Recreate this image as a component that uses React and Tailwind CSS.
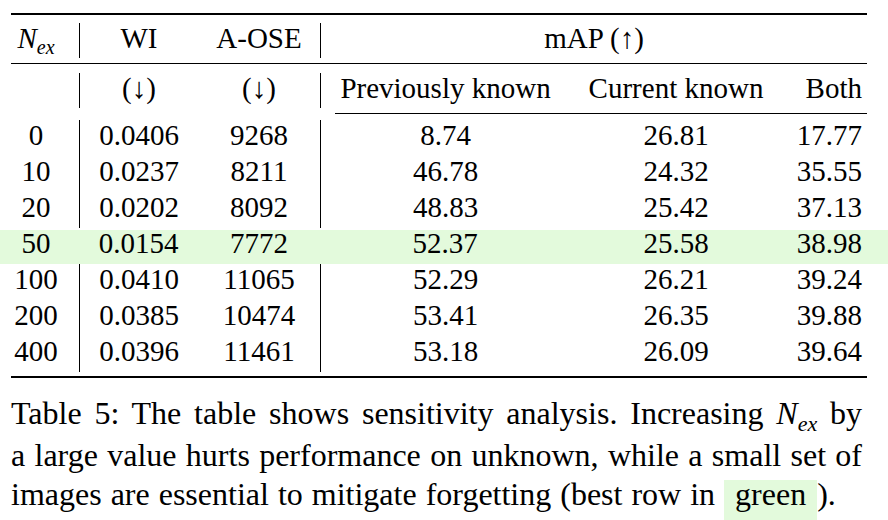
import React from "react";

const cx = (...c) => c.filter(Boolean).join(" ");

const cols = "grid grid-cols-[68px_119px_122px_250px_212px_85px]";

const rows = [
  ["0", "0.0406", "9268", "8.74", "26.81", "17.77"],
  ["10", "0.0237", "8211", "46.78", "24.32", "35.55"],
  ["20", "0.0202", "8092", "48.83", "25.42", "37.13"],
  ["50", "0.0154", "7772", "52.37", "25.58", "38.98", true],
  ["100", "0.0410", "11065", "52.29", "26.21", "39.24"],
  ["200", "0.0385", "10474", "53.41", "26.35", "39.88"],
  ["400", "0.0396", "11461", "53.18", "26.09", "39.64"],
];

function Nex({ sub = "text-[20px]" }) {
  return (
    <span className="font-['Liberation_Serif',serif] italic">
      N<span className={cx(sub, "relative top-[0.3em]")}>ex</span>
    </span>
  );
}

function DataRow({ r }) {
  const green = r[6];
  const line = green ? "" : "border-l border-black";
  const cells = (
    <div className={cx(cols, green ? "h-[34px] leading-[26px]" : "h-[36px] leading-[30px]")}>
      <div className="pr-[18px] text-center">{r[0]}</div>
      <div className={cx(line, "text-center")}>{r[1]}</div>
      <div className="text-center">{r[2]}</div>
      <div className={cx(line, "text-center")}>{r[3]}</div>
      <div className="text-center">{r[4]}</div>
      <div className="pr-[5px] text-right">{r[5]}</div>
    </div>
  );
  if (!green) return cells;
  return (
    <div className="-ml-[11px] -mr-[21px] mt-[2px] bg-[#e3fadc] pl-[11px] pr-[21px]">{cells}</div>
  );
}

export default function App() {
  return (
    <div className="h-[520px] w-[888px] overflow-hidden bg-white text-black">
      <div className="ml-[11px] w-[856px] pt-[13px] font-['Liberation_Serif',serif] text-[29px]">
        <div className="h-[2px] bg-black" />
        <div className={cx(cols, "mb-[5px] mt-[8px] h-[35px] leading-[30px]")}>
          <div className="pr-[18px] text-center">
            <Nex />
          </div>
          <div className="border-l border-black text-center">WI</div>
          <div className="text-center">A-OSE</div>
          <div className="col-span-3 border-l border-black text-center">mAP (↑)</div>
        </div>
        <div className="h-px bg-black" />
        <div className={cx(cols, "mb-[5px] mt-[9px] h-[35px] leading-[30px]")}>
          <div />
          <div className="border-l border-black text-center">(↓)</div>
          <div className="text-center">(↓)</div>
          <div className="border-l border-black text-center">Previously known</div>
          <div className="text-center">Current known</div>
          <div className="pr-[5px] text-right">Both</div>
        </div>
        <div className="ml-[324px] h-px bg-black" />
        <div className="mt-[6px]">
          {rows.map((r) => (
            <DataRow key={r[0]} r={r} />
          ))}
        </div>
        <div className="mt-[4px] h-[2px] bg-black" />
      </div>

      <div className="ml-[11px] mt-[16px] w-[851px] font-['Liberation_Serif',serif] text-[32px] leading-[39px]">
        <div className="text-justify [text-align-last:justify]">
          Table 5: The table shows sensitivity analysis.  Increasing <Nex sub="text-[22px]" /> by
        </div>
        <div className="text-justify [text-align-last:justify]">
          a large value hurts performance on unknown, while a small set of
        </div>
        <div className="[word-spacing:1px]">
          images are essential to mitigate forgetting (best row in{" "}
          <span className="inline-block bg-[#e3fadc] px-[11px] pb-[16px] leading-[28px] [word-spacing:0px]">green</span>).
        </div>
      </div>
    </div>
  );
}
